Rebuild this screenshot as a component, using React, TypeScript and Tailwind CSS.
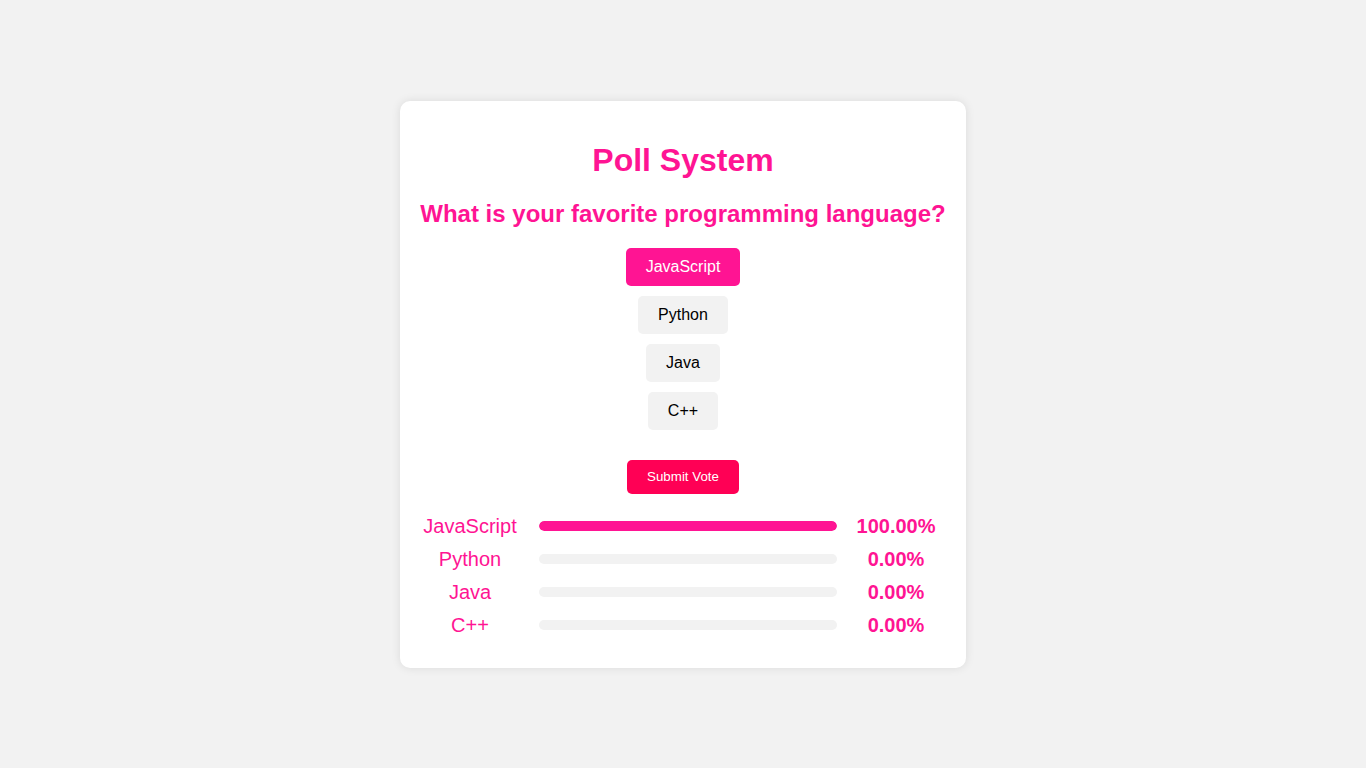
import React from "react";

const options = ["JavaScript", "Python", "Java", "C++"];
const results = [
  { name: "JavaScript", pct: 100 },
  { name: "Python", pct: 0 },
  { name: "Java", pct: 0 },
  { name: "C++", pct: 0 },
];

export default function App() {
  return (
    <div
      className="min-h-screen bg-[#f2f2f2] flex items-center justify-center"
      style={{ fontFamily: '"Liberation Sans", Arial, sans-serif' }}
    >
      <div className="bg-white rounded-[10px] shadow-[0_0_10px_rgba(0,0,0,0.1)] p-[20px] flex flex-col items-center">
        <h1 className="text-[32px] leading-[37px] font-bold text-[#ff1493] mt-[21px] mb-[21px]">
          Poll System
        </h1>
        <h2 className="text-[24px] leading-[28px] font-bold text-[#ff1493] mb-[20px]">
          What is your favorite programming language?
        </h2>
        <div className="flex flex-col items-center gap-[10px]">
          {options.map((o, i) => (
            <button
              key={o}
              className={
                i === 0
                  ? "bg-[#ff1493] text-white text-[16px] leading-[18px] py-[10px] px-[20px] rounded-[5px]"
                  : "bg-[#f2f2f2] text-black text-[16px] leading-[18px] py-[10px] px-[20px] rounded-[5px]"
              }
            >
              {o}
            </button>
          ))}
        </div>
        <button className="mt-[30px] bg-[#ff0055] text-white text-[13.33px] leading-[14px] py-[10px] px-[20px] rounded-[5px]">
          Submit Vote
        </button>
        <div className="mt-[21px] mb-[11px] flex flex-col gap-[10px] w-[526px]">
          {results.map((r) => (
            <div key={r.name} className="flex items-center">
              <div className="w-[100px] text-center text-[20px] leading-[23px] text-[#ff1493]">
                {r.name}
              </div>
              <div className="ml-[19px] w-[298px] h-[10px] rounded-[5px] bg-[#f2f2f2] overflow-hidden">
                <div
                  className="h-full bg-[#ff1493] rounded-[5px]"
                  style={{ width: `${r.pct}%` }}
                />
              </div>
              <div className="ml-[9px] w-[100px] text-center text-[20px] leading-[23px] font-bold text-[#ff1493]">
                {r.pct.toFixed(2)}%
              </div>
            </div>
          ))}
        </div>
      </div>
    </div>
  );
}
